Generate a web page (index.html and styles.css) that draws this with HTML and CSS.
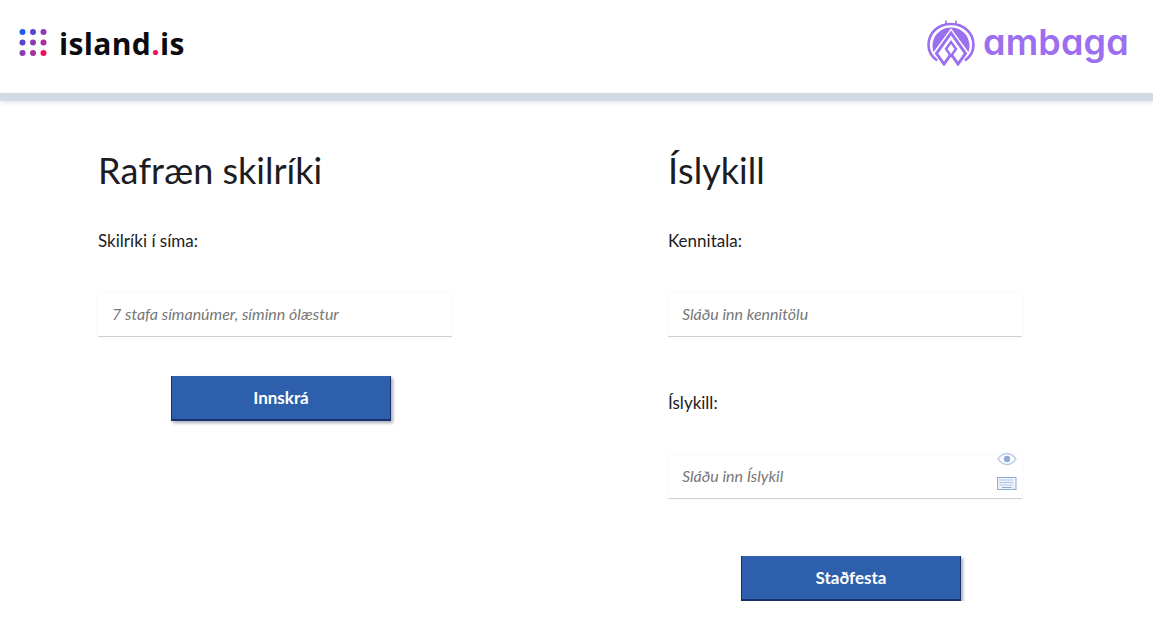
FILE: index.html
```html
<!DOCTYPE html>
<html lang="is">

<head>
    <meta charset="UTF-8">
    <meta name="viewport" content="width=device-width, initial-scale=1.0">
    <title>Innskráning</title>
    <link rel="stylesheet" href="styles.css">
</head>

<body>
    <header class="top">
        <div class="brand">
            <svg class="dots" width="28" height="28" viewBox="0 0 28 28">
                <circle cx="3.500" cy="3" r="3" fill="#1f5cf0" />
                <circle cx="14" cy="3" r="3" fill="#5a45d0" />
                <circle cx="24.500" cy="3" r="3" fill="#8a3cb0" />
                <circle cx="3.500" cy="13.500" r="3" fill="#5a45c8" />
                <circle cx="14" cy="13.500" r="3" fill="#8a3cb0" />
                <circle cx="24.500" cy="13.500" r="3" fill="#a8309c" />
                <circle cx="3.500" cy="24" r="3" fill="#8a3cb0" />
                <circle cx="14" cy="24" r="3" fill="#a8309c" />
                <circle cx="24.500" cy="24" r="3" fill="#f0105c" />
            </svg>
            <span class="brand-name">island<span class="brand-dot">.</span>is</span>
        </div>
        <div class="partner">
            <svg class="partner-mark" width="48" height="46" viewBox="0 0 48 46">
                <path d="M19 0.500v3.500h10V0.500" fill="none" stroke="#9c6ef0" stroke-width="1.600" />
                <path d="M10 40.500C4.500 36.500 1.500 31 1.500 25 1.500 13 11 4 24 4s22.500 9 22.500 21c0 6-3 11.500-8.500 15.500" fill="none" stroke="#9c6ef0" stroke-width="2.600" />
                <path d="M5.500 26C5.500 15 14 7.500 24 7.500S42.500 15 42.500 26c0 3.500-1 6.500-3 9.500H8.500c-2-3-3-6-3-9.500Z" fill="#9c6ef0" />
                <path d="M24 12.500 9 33l9 11 6-9 6 9 9-11Z" fill="#fff" stroke="#fff" stroke-width="5" />
                <path d="M24 13 9.500 33.500 17 44l7-10 7 10 7.500-10.500Z" fill="#fff" stroke="#9c6ef0" stroke-width="3" />
                <path d="M24 22l-5 7 5 7 5-7Z" fill="#fff" stroke="#9c6ef0" stroke-width="2.400" />
            </svg>
            <span class="partner-name">ambaga</span>
        </div>
    </header>
    <div class="bar"></div>

    <main class="login">
        <section class="col">
            <h1>Rafræn skilríki</h1>
            <label class="lbl" for="phone">Skilríki í síma:</label>
            <div class="field">
                <input type="text" id="phone" placeholder="7 stafa símanúmer, síminn ólæstur">
            </div>
            <button class="btn" type="button">Innskrá</button>
        </section>

        <section class="col">
            <h1>Íslykill</h1>
            <label class="lbl" for="kt">Kennitala:</label>
            <div class="field">
                <input type="text" id="kt" placeholder="Sláðu inn kennitölu">
            </div>
            <label class="lbl lbl-second" for="key">Íslykill:</label>
            <div class="field">
                <input type="password" id="key" placeholder="Sláðu inn Íslykil">
                <div class="field-icons">
                    <svg width="20" height="14" viewBox="0 0 20 14">
                        <path d="M1 7C4 3 7 1.500 10 1.500S16 3 19 7c-3 4-6 5.500-9 5.500S4 11 1 7Z" fill="none" stroke="#b9cbe6" stroke-width="1.300" />
                        <circle cx="10" cy="7" r="3.200" fill="#8faad6" />
                    </svg>
                    <svg width="20" height="14" viewBox="0 0 20 14">
                        <rect x="0.500" y="0.500" width="18.500" height="12" fill="#eef3fa" stroke="#8faad6" />
                        <path d="M2.500 3h14M2.500 5.500h14M2.500 8h14" stroke="#8faad6" stroke-dasharray="1.200 0.800" />
                        <path d="M5 10.500h9.500" stroke="#8faad6" />
                    </svg>
                </div>
            </div>
            <button class="btn btn-last" type="button">Staðfesta</button>
        </section>
    </main>
</body>

</html>
```

FILE: styles.css
```css
* {
    box-sizing: border-box;
    margin: 0;
    padding: 0;
}

body {
    background-color: #fff;
    color: #1c1c22;
    font-family: "Lato", sans-serif;
    overflow: hidden;
}

.top {
    height: 93px;
    padding: 20px 24px 0 19px;
    display: flex;
    justify-content: space-between;
    align-items: flex-start;
}

.brand {
    display: flex;
    align-items: center;
    gap: 12px;
    height: 46px;
}

.dots {
    margin-top: -1px;
}

.brand-name {
    font-family: "Open Sans", sans-serif;
    font-weight: 700;
    font-size: 30px;
    letter-spacing: 0.35px;
    color: #0c0c10;
}

.brand-dot {
    color: #f0105c;
}

.partner {
    display: flex;
    align-items: center;
    gap: 8px;
    height: 46px;
    color: #9c6ef0;
}

.partner-name {
    font-family: "Inter", sans-serif;
    font-feature-settings: "cv11";
    font-weight: 600;
    font-size: 36px;
    letter-spacing: 0.2px;
    margin-top: -3px;
}

.bar {
    height: 8px;
    background-color: #d4d9e6;
    box-shadow: 0 2px 4px rgba(212, 217, 230, 0.6);
}

.login {
    display: grid;
    grid-template-columns: 570px 354px;
    padding: 47px 0 0 98px;
}

.col h1 {
    font-size: 36px;
    font-weight: 400;
    font-kerning: none;
    line-height: 44px;
    margin-bottom: 39px;
}

.lbl {
    display: block;
    font-size: 17px;
    line-height: 20px;
    margin-bottom: 42px;
}

.lbl-second {
    margin-top: 56px;
}

.field {
    position: relative;
    width: 354px;
    height: 44px;
    background-color: #fff;
    border-bottom: 1px solid #cfcfcf;
    box-shadow: 0 0 3px rgba(0, 0, 0, 0.05);
}

.field input {
    width: 100%;
    height: 100%;
    border: 0;
    outline: 0;
    padding: 0 14px 2px;
    font-family: "Lato", sans-serif;
    font-size: 16px;
    background: transparent;
}

.field input::placeholder {
    color: #777;
    font-style: italic;
    opacity: 1;
}

.field-icons {
    position: absolute;
    top: -3px;
    right: 5px;
    display: flex;
    flex-direction: column;
    gap: 11px;
}

.field-icons svg {
    display: block;
}

.btn {
    display: block;
    width: 220px;
    height: 45px;
    margin: 39px 0 0 73px;
    background-color: #2d5fad;
    border-style: solid;
    border-color: #1a2f6e;
    border-width: 0 1px 2px 1px;
    box-shadow: 2px 2px 3px rgba(40, 50, 80, 0.4);
    color: #fff;
    font-family: "Lato", sans-serif;
    font-size: 17px;
    font-weight: 700;
}

.btn-last {
    margin-top: 57px;
}
```
